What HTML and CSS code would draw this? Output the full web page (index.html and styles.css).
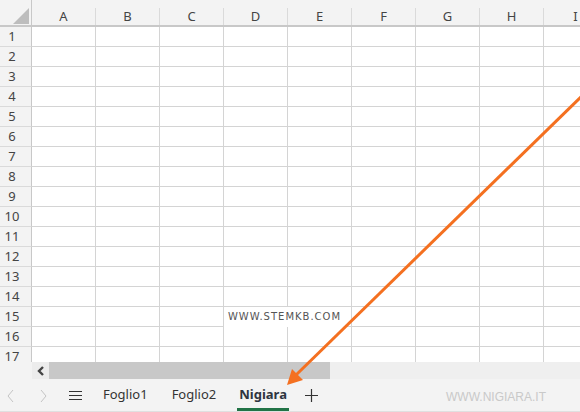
FILE: index.html
```html
<!DOCTYPE html>
<html>
<head>
<meta charset="utf-8">
<link rel="stylesheet" href="styles.css">
</head>
<body>
<div class="app">
  <div class="grid-wrap">
    <div class="sheet">
      <div class="corner"><svg width="16" height="16" viewBox="0 0 16 16"><polygon points="16,0 16,16 0,16" fill="#bdbdbd"/></svg></div>
      <div class="colhead"><span>A</span></div>
      <div class="colhead"><span>B</span></div>
      <div class="colhead"><span>C</span></div>
      <div class="colhead"><span>D</span></div>
      <div class="colhead"><span>E</span></div>
      <div class="colhead"><span>F</span></div>
      <div class="colhead"><span>G</span></div>
      <div class="colhead"><span>H</span></div>
      <div class="colhead"><span>I</span></div>
    </div>
    <div class="body-grid" id="rows"></div>
  </div>
  <div class="hscroll">
    <div class="hs-gap"></div>
    <div class="hs-btn"><svg width="10" height="12" viewBox="0 0 10 12"><path d="M7 2 L3 6 L7 10" fill="none" stroke="#444" stroke-width="2.4"/></svg></div>
    <div class="hs-thumb"></div>
    <div class="hs-track"></div>
  </div>
  <div class="tabbar">
    <div class="nav"><svg width="10" height="14" viewBox="0 0 10 14"><path d="M7 1 L2 7 L7 13" fill="none" stroke="#c4c4c4" stroke-width="1"/></svg></div>
    <div class="nav nav2"><svg width="10" height="14" viewBox="0 0 10 14"><path d="M3 1 L8 7 L3 13" fill="none" stroke="#c4c4c4" stroke-width="1"/></svg></div>
    <div class="menu"><svg width="13" height="11" viewBox="0 0 13 11"><path d="M0 1.5 H13 M0 5.5 H13 M0 9.5 H13" stroke="#333" stroke-width="1.2"/></svg></div>
    <div class="tab first">Foglio1</div>
    <div class="tab">Foglio2</div>
    <div class="tab active">Nigiara</div>
    <div class="plus"><svg width="13" height="13" viewBox="0 0 13 13"><path d="M6.5 0 V13 M0 6.5 H13" stroke="#333" stroke-width="1.2"/></svg></div>
    <div class="brand">WWW.NIGIARA.IT</div>
  </div>
  <div class="stamp">WWW.STEMKB.COM</div>
  <svg class="arrow" width="580" height="412" viewBox="0 0 580 412">
    <line x1="584" y1="94" x2="296" y2="375" stroke="#f47020" stroke-width="3"/>
    <polygon points="287,385 292,369 303,380" fill="#f47020"/>
  </svg>
</div>
<script>
(function(){
  var rows=document.getElementById('rows');
  var html='';
  for(var r=1;r<=17;r++){
    html+='<div class="rowhead">'+r+'</div>';
    for(var c=0;c<9;c++){html+='<div class="cell"></div>';}
  }
  rows.innerHTML=html;
})();
</script>
</body>
</html>
```
FILE: styles.css
```css
*{box-sizing:border-box;}
html,body{margin:0;padding:0;}
body{width:580px;height:412px;overflow:hidden;background:#fff;font-family:"Noto Sans","Open Sans",sans-serif;}
.app{position:relative;width:580px;height:412px;display:flex;flex-direction:column;}
.grid-wrap{height:362px;overflow:hidden;flex:none;}
.sheet,.body-grid{display:grid;grid-template-columns:32px repeat(9,64px);width:608px;}
.sheet{height:27px;background:#f3f3f3;border-bottom:2px solid #c8c8c8;}
.corner{border-right:1px solid #c8c8c8;display:flex;align-items:flex-end;justify-content:flex-end;padding:0 2px 1px 0;}
.corner svg{display:block;}
.colhead{padding-top:8px;}
.colhead span{display:block;height:17px;border-right:1px solid #dadada;text-align:center;font-size:13px;line-height:17px;color:#444;}
.body-grid{grid-auto-rows:20px;}
.rowhead{background:#f3f3f3;border-right:1px solid #c8c8c8;border-bottom:1px solid #dadada;font-size:13px;line-height:18px;color:#444;text-align:center;padding-right:7px;}
.cell{border-right:1px solid #d4d4d4;border-bottom:1px solid #d4d4d4;}
.hscroll{height:17px;display:flex;flex:none;}
.hs-gap{width:32px;background:#f3f3f3;}
.hs-btn{width:17px;background:#ececec;display:flex;align-items:center;justify-content:center;}
.hs-thumb{width:281px;background:#c8c8c8;}
.hs-track{flex:1;background:#efefef;}
.tabbar{height:33px;flex:none;background:#f3f3f3;border-bottom:1px solid #e0e0e0;display:flex;align-items:center;}
.nav{width:22px;display:flex;justify-content:center;padding-top:1px;}
.nav2{margin-left:10px;}
.nav svg{display:block;}
.menu{width:26px;margin-left:8px;display:flex;justify-content:center;}
.menu svg{display:block;}
.tab{position:relative;height:32px;line-height:31px;font-size:13px;color:#333;margin-left:24px;}
.tab.first{margin-left:15px;}
.active{font-weight:700;color:#2e3540;margin-left:23px;}
.active::after{content:"";position:absolute;left:-2px;right:-2px;bottom:0;height:3px;background:#217346;}
.plus{margin-left:18px;display:flex;}
.plus svg{display:block;}
.brand{margin-left:auto;margin-right:34px;font-family:"Liberation Sans",Arial,sans-serif;font-size:12px;color:#c9c9c9;padding-top:3px;}
.stamp{position:absolute;left:224px;top:307px;width:121px;height:20px;background:#fff;font-family:"DejaVu Sans",sans-serif;font-size:10px;letter-spacing:1px;color:#555;line-height:20px;text-align:center;}
.arrow{position:absolute;left:0;top:0;pointer-events:none;}
```
